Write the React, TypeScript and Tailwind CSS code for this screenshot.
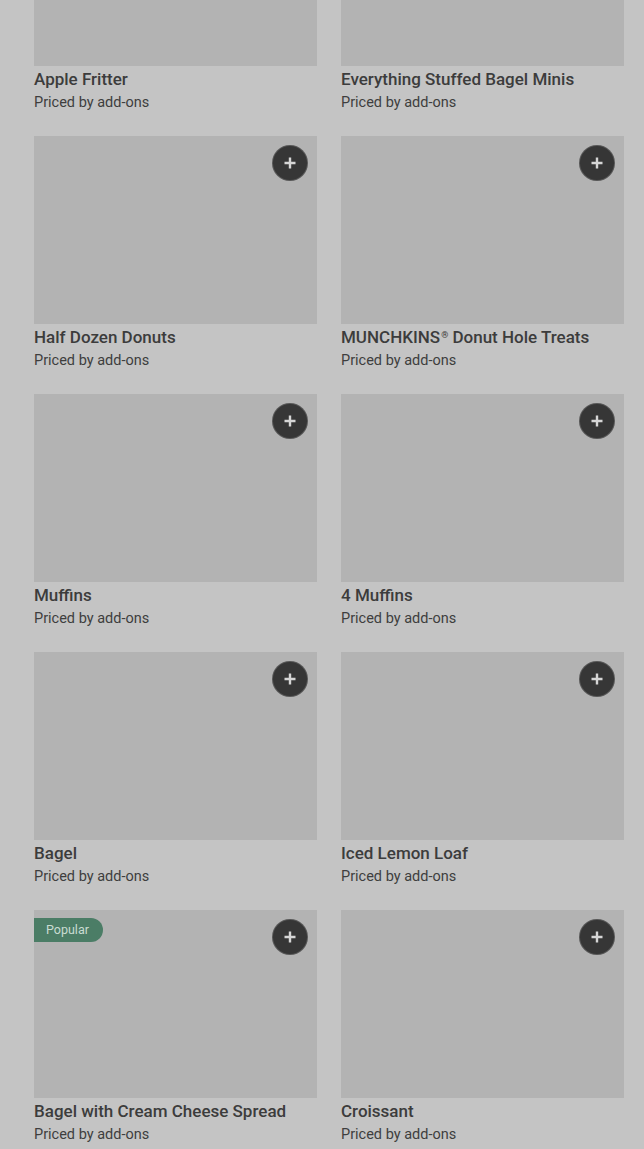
import React from "react";

const items = [
  { title: "Apple Fritter" },
  { title: "Everything Stuffed Bagel Minis" },
  { title: "Half Dozen Donuts" },
  { title: "MUNCHKINS", sup: "®", rest: " Donut Hole Treats" },
  { title: "Muffins" },
  { title: "4 Muffins" },
  { title: "Bagel" },
  { title: "Iced Lemon Loaf" },
  { title: "Bagel with Cream Cheese Spread", popular: true },
  { title: "Croissant" },
];

const Plus = () => (
  <div className="absolute top-[9px] right-[9px] w-9 h-9 rounded-full bg-[#363636] border border-[#8a8a8a]/40 flex items-center justify-center">
    <svg width="14" height="14" viewBox="0 0 14 14">
      <path d="M7 1.5v11M1.5 7h11" stroke="#d6d6d6" strokeWidth="2.4" />
    </svg>
  </div>
);

const Card = ({ title, sup, rest, popular }: any) => {
  return (
    <div className="flex flex-col">
      <div className="relative h-[188px] bg-[#b3b3b3]">
        {popular && (
          <div className="absolute top-2 left-0 h-6 pl-3 pr-[14px] rounded-r-full bg-[#4b7d66] text-[#c9dcd2] text-[12.5px] flex items-center">
            Popular
          </div>
        )}
        <Plus />
      </div>
      <div className="text-[17px] leading-[18px] font-medium text-[#3c3c3c] mt-[4px] h-[18px] flex items-center">
        <span>
          {title}
          {sup && <sup className="text-[9px] ml-[1px] -top-[5px]">{sup}</sup>}
          {rest}
        </span>
      </div>
      <div className="text-[14.5px] leading-[18px] text-[#3e3e3e] mt-[6px]">
        Priced by add-ons
      </div>
    </div>
  );
};

export default function App() {
  return (
    <div
      className="w-[644px] h-[1149px] overflow-hidden bg-[#c4c4c4]"
      style={{ fontFamily: "Roboto, 'Noto Sans', sans-serif" }}
    >
      <div className="grid grid-cols-2 gap-x-6 gap-y-[24px] pl-[34px] pr-[20px] mt-[-122px]">
        {items.map((it, i) => (
          <Card key={i} {...it} />
        ))}
      </div>
    </div>
  );
}
